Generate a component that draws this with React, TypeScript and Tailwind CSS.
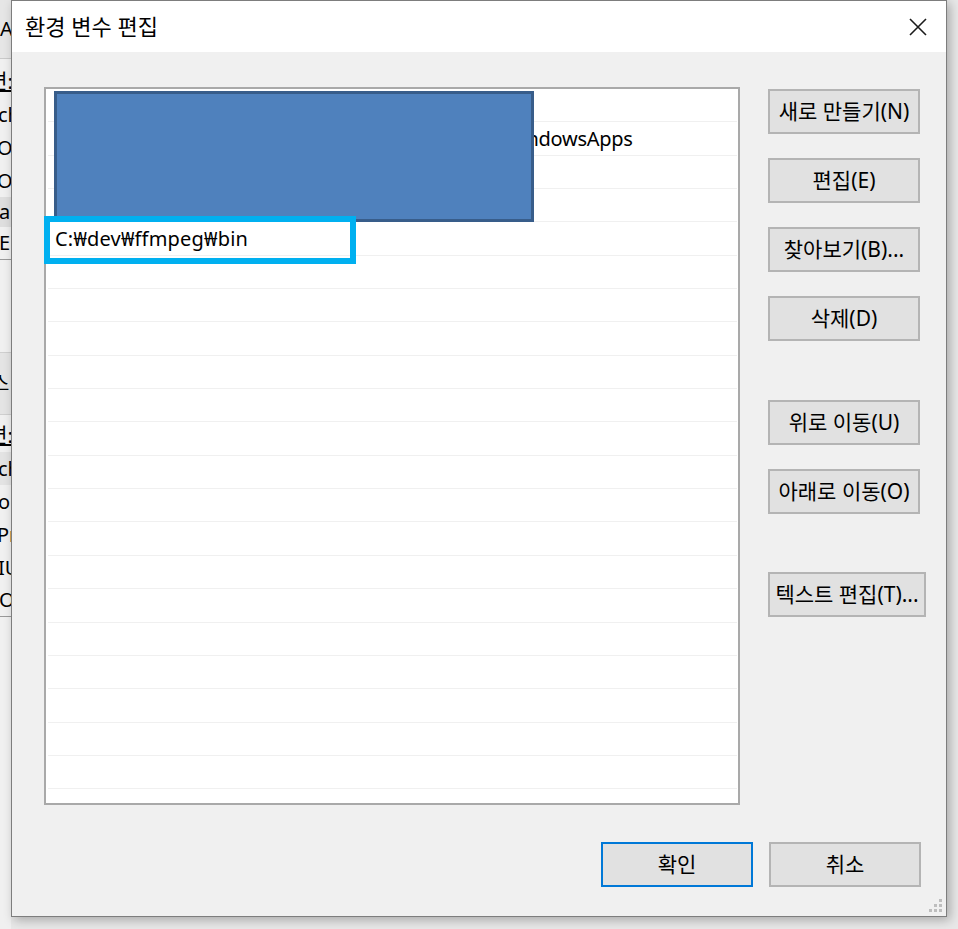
import React from 'react';

const font = "font-['Noto_Sans','Noto_Sans_CJK_KR',sans-serif]";

const listRows: React.ReactNode[] = [
  '',
  <>
    <span className="tracking-[0.35px]">%USERPROFILE%₩AppData₩Local₩Microsoft₩Wi</span>
    <span className="tracking-[-0.3px]">ndowsApps</span>
  </>,
  '',
  '',
  <span className="tracking-[0.2px]">C:₩dev₩ffmpeg₩bin</span>,
  ...Array(16).fill(''),
];

function Button({ label, wide, primary }: { label: string; wide?: boolean; primary?: boolean }) {
  return (
    <button
      type="button"
      className={[
        'h-[45px] bg-[#e1e1e1] border-2 text-[21px] leading-none text-black flex items-center justify-center',
        wide ? 'w-[158px]' : 'w-[152px]',
        primary ? 'border-[#0078d7]' : 'border-[#b4b4b4]',
      ].join(' ')}
    >
      {label}
    </button>
  );
}

// the window lying behind the dialog, only its right edge shows
function BackWindow() {
  return (
    <div className="w-[11px] h-[929px] overflow-hidden bg-[#f0f0f0] text-[20px] text-black whitespace-nowrap flex flex-col">
      <div className="h-[59px] bg-[#e6e6e6] border-b border-[#c9c9c9] flex items-center">
        <span className="ml-0">AF</span>
      </div>
      <div className="h-[33px] flex items-center mt-[6px]">
        <span className="-ml-[11px] underline">변:</span>
      </div>
      <div className="h-[33px] flex items-center"><span className="-ml-[2px]">ch</span></div>
      <div className="h-[33px] flex items-center"><span className="-ml-[3px]">Or</span></div>
      <div className="h-[33px] flex items-center"><span className="-ml-[3px]">Or</span></div>
      <div className="h-[30px] flex items-center bg-[#dedede]"><span className="-ml-[1px]">a</span></div>
      <div className="h-[33px] flex items-center border-b border-[#9a9a9a]"><span className="-ml-[1px]">El</span></div>
      <div className="h-[92px]" />
      <div className="h-[63px] bg-[#e4e4e4] border-y border-[#cfcfcf] flex items-center">
        <span className="-ml-[9px]">스</span>
      </div>
      <div className="h-[33px] flex items-center mt-[4px]">
        <span className="-ml-[11px] underline">변:</span>
      </div>
      <div className="h-[33px] flex items-center bg-[#e3e3e3]"><span className="-ml-[2px]">ch</span></div>
      <div className="h-[33px] flex items-center"><span className="-ml-[2px]">o</span></div>
      <div className="h-[33px] flex items-center"><span className="-ml-[3px]">Pr</span></div>
      <div className="h-[33px] flex items-center"><span className="-ml-[2px]">IU</span></div>
      <div className="h-[33px] flex items-center border-b border-[#9a9a9a]"><span className="-ml-[1px]">OS</span></div>
    </div>
  );
}

export default function App() {
  return (
    <div className={`w-[958px] h-[929px] bg-[#e8e8e8] flex overflow-hidden ${font}`}>
      <BackWindow />

      <div className="relative w-[936px] h-[917px] bg-[#f0f0f0] border border-[#7d7d7d] flex flex-col shadow-[3px_3px_10px_rgba(0,0,0,0.28)]">
        {/* title bar */}
        <div className="h-[51px] bg-white flex items-center justify-between pl-[13px] pr-[19px]">
          <span className="text-[22px] text-black">환경 변수 편집</span>
          <svg width="18" height="18" viewBox="0 0 18 18" className="text-[#1b1b1b]">
            <path d="M1 1 L17 17 M17 1 L1 17" stroke="currentColor" strokeWidth="1.6" fill="none" />
          </svg>
        </div>

        <div className="flex pl-[32px] pt-[35px] gap-[28px]">
          {/* path list */}
          <div className="relative w-[696px] h-[718px] bg-white border-2 border-[#a9a9a9] pl-[2px] pr-[1px]">
            {listRows.map((text, i) => (
              <div
                key={i}
                className="h-[33.35px] border-b border-[#f0f0f0] flex items-center pl-[7px] text-[20px] text-black whitespace-nowrap"
              >
                {text}
              </div>
            ))}

            {/* redaction box */}
            <div className="absolute left-[8px] top-[2px] w-[480px] h-[131px] bg-[#4f81bd] border-[3px] border-[#385d8a]" />
            {/* highlight box */}
            <div className="absolute -left-[2px] top-[127px] w-[312px] h-[48px] border-[6px] border-[#00b0f0]" />
          </div>

          {/* side buttons */}
          <div className="flex flex-col pt-[2px]">
            <div className="flex flex-col gap-[24px]">
              <Button label="새로 만들기(N)" />
              <Button label="편집(E)" />
              <Button label="찾아보기(B)..." />
              <Button label="삭제(D)" />
            </div>
            <div className="flex flex-col gap-[24px] mt-[59px]">
              <Button label="위로 이동(U)" />
              <Button label="아래로 이동(O)" />
            </div>
            <div className="mt-[58px]">
              <Button label="텍스트 편집(T)..." wide />
            </div>
          </div>
        </div>

        <div className="flex justify-end gap-[16px] pr-[25px] mt-[37px]">
          <Button label="확인" primary />
          <Button label="취소" />
        </div>

        {/* size grip */}
        <svg width="16" height="16" viewBox="0 0 16 16" className="absolute right-[3px] bottom-[3px]">
          <g fill="#bdbdbd">
            <rect x="12" y="2" width="3" height="3" />
            <rect x="7" y="7" width="3" height="3" />
            <rect x="12" y="7" width="3" height="3" />
            <rect x="2" y="12" width="3" height="3" />
            <rect x="7" y="12" width="3" height="3" />
            <rect x="12" y="12" width="3" height="3" />
          </g>
        </svg>
      </div>
    </div>
  );
}
